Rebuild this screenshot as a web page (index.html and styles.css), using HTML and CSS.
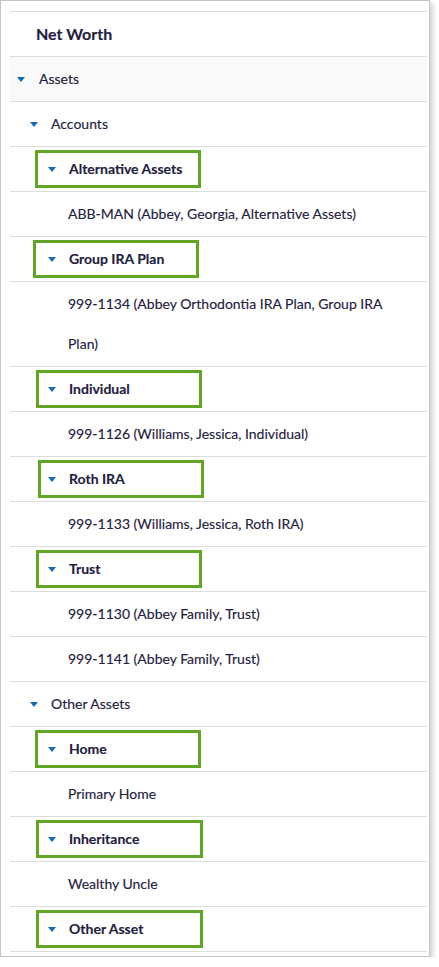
FILE: index.html
```html
<!DOCTYPE html>
<html>
<head>
<meta charset="utf-8">
<link rel="stylesheet" href="styles.css">
</head>
<body>
<div class="panel">
  <ul class="tree">
    <li class="row title">Net Worth</li>
    <li class="row lvl1 shaded"><span class="caret"></span>Assets</li>
    <li class="row lvl2"><span class="caret"></span>Accounts</li>
    <li class="row lvl3"><span class="hl w166"><span class="caret"></span>Alternative Assets</span></li>
    <li class="row leaf">ABB-MAN (Abbey, Georgia, Alternative Assets)</li>
    <li class="row lvl3 shift-l"><span class="hl w166"><span class="caret"></span>Group IRA Plan</span></li>
    <li class="row leaf">999-1134 (Abbey Orthodontia IRA Plan, Group IRA Plan)</li>
    <li class="row lvl3 shift-r1"><span class="hl w166"><span class="caret"></span>Individual</span></li>
    <li class="row leaf">999-1126 (Williams, Jessica, Individual)</li>
    <li class="row lvl3 shift-r3"><span class="hl w166"><span class="caret"></span>Roth IRA</span></li>
    <li class="row leaf">999-1133 (Williams, Jessica, Roth IRA)</li>
    <li class="row lvl3 shift-r1"><span class="hl w166"><span class="caret"></span>Trust</span></li>
    <li class="row leaf">999-1130 (Abbey Family, Trust)</li>
    <li class="row leaf">999-1141 (Abbey Family, Trust)</li>
    <li class="row lvl2"><span class="caret"></span>Other Assets</li>
    <li class="row lvl3"><span class="hl w166"><span class="caret"></span>Home</span></li>
    <li class="row leaf">Primary Home</li>
    <li class="row lvl3 shift-r1"><span class="hl w167"><span class="caret"></span>Inheritance</span></li>
    <li class="row leaf">Wealthy Uncle</li>
    <li class="row lvl3 shift-r1"><span class="hl w167"><span class="caret"></span>Other Asset</span></li>
  </ul>
</div>
</body>
</html>
```
FILE: styles.css
```css
html, body {
  margin: 0;
  padding: 0;
  background: #ffffff;
}
body {
  font-family: Lato, "Open Sans", Arial, sans-serif;
  color: #1f2140;
}
.panel {
  box-sizing: border-box;
  width: 430px;
  height: 957px;
  border: 1px solid #c4c4c4;
  background: #ffffff;
  padding: 10px 2px 0 9px;
  box-shadow: 3px 3px 5px rgba(0, 0, 0, 0.18);
}
.tree {
  list-style: none;
  margin: 0;
  padding: 0;
  border-top: 1px solid #dcdcdc;
}
.row {
  display: flex;
  align-items: center;
  padding: 2px 0;
  min-height: 40px;
  line-height: 40px;
  font-size: 14px;
  border-bottom: 1px solid #dcdcdc;
  -webkit-text-stroke: 0.15px #1f2140;
}
.row.title {
  padding-left: 26px;
  font-size: 16px;
  font-weight: 700;
}
.row.shaded {
  background: #f9f9f9;
}
.caret {
  display: inline-block;
  width: 0;
  height: 0;
  border-left: 4px solid transparent;
  border-right: 4px solid transparent;
  border-top: 5px solid #1769b4;
  margin-right: 13px;
  flex: none;
}
.lvl1 {
  padding-left: 7px;
}
.lvl1 .caret {
  margin-right: 14px;
}
.lvl2 {
  padding-left: 20px;
}
.lvl3 {
  padding-left: 25px;
  font-weight: 700;
}
.hl {
  box-sizing: border-box;
  display: inline-flex;
  align-items: center;
  height: 38px;
  line-height: 32px;
  border: 3px solid #62a526;
  padding-left: 10px;
}
.shift-l {
  padding-left: 23px;
}
.shift-l .hl {
  padding-left: 12px;
}
.shift-r1 {
  padding-left: 26px;
}
.shift-r1 .hl {
  padding-left: 9px;
}
.shift-r3 {
  padding-left: 28px;
}
.shift-r3 .hl {
  padding-left: 7px;
}
.w166 {
  width: 166px;
}
.w167 {
  width: 167px;
}
.leaf {
  display: block;
  padding-left: 58px;
  padding-right: 30px;
}
```
